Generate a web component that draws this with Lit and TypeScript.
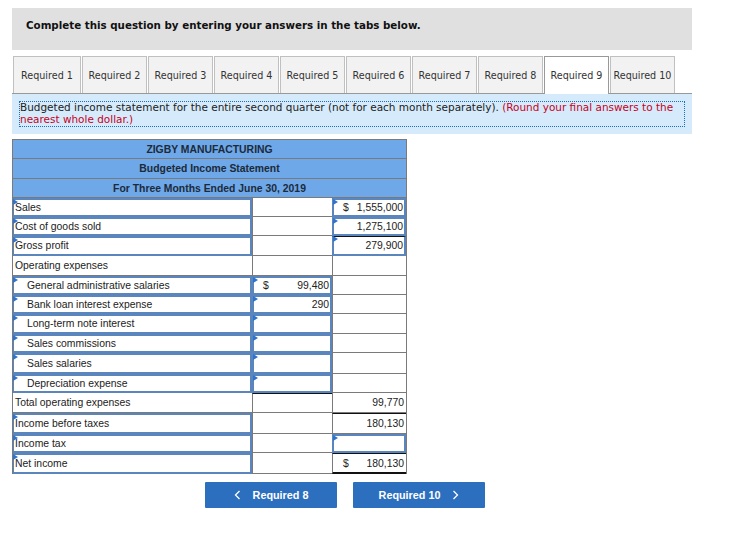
import {html, css, LitElement} from 'lit';
import {customElement} from 'lit/decorators.js';

interface Cell {
  text?: string;
  dollar?: boolean;
  input?: boolean;
  top?: boolean;
  bottom?: boolean;
}

interface Row {
  label: string;
  indent?: boolean;
  labelInput?: boolean;
  h: number;
  amount?: Cell;
  total?: Cell;
}

const TABS = [1, 2, 3, 4, 5, 6, 7, 8, 9, 10];

const ROWS: Row[] = [
  {label: 'Sales', labelInput: true, h: 19, amount: {}, total: {text: '1,555,000', dollar: true, input: true}},
  {label: 'Cost of goods sold', labelInput: true, h: 19, amount: {}, total: {text: '1,275,100', input: true}},
  {label: 'Gross profit', labelInput: true, h: 20, amount: {}, total: {text: '279,900', input: true, top: true}},
  {label: 'Operating expenses', h: 20},
  {label: 'General administrative salaries', indent: true, labelInput: true, h: 19, amount: {text: '99,480', dollar: true, input: true}},
  {label: 'Bank loan interest expense', indent: true, labelInput: true, h: 19, amount: {text: '290', input: true}},
  {label: 'Long-term note interest', indent: true, labelInput: true, h: 20, amount: {input: true}},
  {label: 'Sales commissions', indent: true, labelInput: true, h: 19, amount: {input: true}},
  {label: 'Sales salaries', indent: true, labelInput: true, h: 21, amount: {input: true}},
  {label: 'Depreciation expense', indent: true, labelInput: true, h: 19, amount: {input: true}},
  {label: 'Total operating expenses', h: 20, amount: {top: true}, total: {text: '99,770'}},
  {label: 'Income before taxes', labelInput: true, h: 21, amount: {}, total: {text: '180,130', top: true}},
  {label: 'Income tax', labelInput: true, h: 19, amount: {}, total: {input: true}},
  {label: 'Net income', labelInput: true, h: 21, amount: {}, total: {text: '180,130', dollar: true, top: true, bottom: true}},
];

@customElement('app-root')
export class AppRoot extends LitElement {
  static styles = css`
    :host {
      display: block;
      width: 743px;
      height: 544px;
      background: #fff;
      font-family: "DejaVu Sans", Verdana, sans-serif;
      color: #222;
      overflow: hidden;
    }

    .page {
      display: flex;
      flex-direction: column;
      width: 680px;
      padding: 8px 0 0 12px;
    }

    .prompt {
      height: 42px;
      box-sizing: border-box;
      padding: 11px 14px;
      background: #e0e0e0;
      font-size: 10.3px;
      line-height: 13px;
      font-weight: bold;
      color: #111;
    }

    .tabs {
      display: flex;
      gap: 1px;
      height: 37px;
      margin-top: 6px;
      padding-left: 1px;
      border-bottom: 1px solid #999;
    }

    .tab {
      width: 65px;
      height: 37px;
      box-sizing: border-box;
      display: flex;
      align-items: center;
      justify-content: center;
      padding-top: 1px;
      background: #f2f2f2;
      border: 1px solid #c0c0c0;
      border-bottom: none;
      font-size: 9.6px;
      color: #333;
    }

    .tab.first {
      width: 68px;
    }

    .tab.active {
      height: 38px;
      padding-bottom: 1px;
      background: #fff;
      border-color: #999;
      z-index: 1;
    }

    .note {
      height: 40px;
      box-sizing: border-box;
      padding: 7px;
      background: #d5eafa;
    }

    .note-text {
      height: 26px;
      box-sizing: border-box;
      border: 1px dotted #1a6fc4;
      font-size: 10.48px;
      line-height: 12px;
      color: #222;
    }

    .note-copy {
      margin-top: -1px;
    }

    .red {
      color: #c8001e;
    }

    .sheet {
      display: grid;
      grid-template-columns: 239px 80px 74px;
      width: 395px;
      margin-top: 5px;
      box-sizing: border-box;
      border-left: 1px solid #7a7a7a;
      border-right: 1px solid #7a7a7a;
      border-top: 1px solid #7a7a7a;
      font-family: "Liberation Sans", Arial, sans-serif;
      font-size: 10.4px;
      color: #222;
    }

    .head {
      grid-column: 1 / 4;
      height: 19px;
      box-sizing: border-box;
      display: flex;
      align-items: center;
      justify-content: center;
      background: #6ea8e8;
      border-bottom: 1px solid #7a7a7a;
      font-weight: bold;
      color: #1c2a3a;
    }

    .head.tall {
      height: 20px;
    }

    .cell {
      position: relative;
      box-sizing: border-box;
      display: flex;
      align-items: center;
      justify-content: flex-end;
      padding: 0 2px;
      border-bottom: 1px solid #7a7a7a;
      border-left: 1px solid #7a7a7a;
      background: #fff;
    }

    .cell.label {
      justify-content: flex-start;
      border-left: none;
      padding-left: 2px;
    }

    .cell.indent {
      padding-left: 14px;
    }

    .cell.input {
      border: 2px solid #5a86bd;
      padding: 0 1px 1px 1px;
    }

    .cell.input.label {
      border-left-width: 1px;
      padding-left: 1px;
    }

    .cell.input.indent {
      padding-left: 13px;
    }

    .cell.top {
      border-top: 1px solid #111;
    }

    .cell.bottom {
      border-bottom: 2px solid #111;
    }

    .cell.input::before {
      content: "";
      position: absolute;
      left: -1px;
      top: -1px;
      border-left: 5px solid #2f74cc;
      border-top: 3px solid transparent;
      border-bottom: 3px solid transparent;
    }

    .dollar {
      margin-right: auto;
      padding-left: 8px;
    }

    .actions {
      display: flex;
      gap: 16px;
      margin: 8px 0 0 193px;
    }

    .btn {
      width: 132px;
      height: 26px;
      display: flex;
      align-items: center;
      justify-content: center;
      gap: 12px;
      background: #2d6fbf;
      border-radius: 1px;
      font-family: "Liberation Sans", Arial, sans-serif;
      font-size: 10.8px;
      font-weight: bold;
      color: #fff;
    }

    .btn svg {
      display: block;
    }
  `;

  private renderCell(cell: Cell | undefined) {
    const c = cell ?? {};
    const cls = ['cell', c.input ? 'input' : '', c.top ? 'top' : '', c.bottom ? 'bottom' : ''].join(' ');
    return html`<div class=${cls}>
      ${c.dollar ? html`<span class="dollar">$</span>` : ''}${c.text ?? ''}
    </div>`;
  }

  render() {
    return html`
      <div class="page">
        <div class="prompt">Complete this question by entering your answers in the tabs below.</div>
        <div class="tabs">
          ${TABS.map((n) => html`<div class="tab ${n === 1 ? 'first' : ''} ${n === 9 ? 'active' : ''}">Required ${n}</div>`)}
        </div>
        <div class="note">
          <div class="note-text">
            <div class="note-copy">
              Budgeted income statement for the entire second quarter (not for each month separately).
              <span class="red">(Round your final answers to the nearest whole dollar.)</span>
            </div>
          </div>
        </div>
        <div class="sheet">
          <div class="head">ZIGBY MANUFACTURING</div>
          <div class="head tall">Budgeted Income Statement</div>
          <div class="head">For Three Months Ended June 30, 2019</div>
          ${ROWS.map((row) => html`
            <div
              class="cell label ${row.indent ? 'indent' : ''} ${row.labelInput ? 'input' : ''}"
              style="height:${row.h}px"
            >${row.label}</div>
            ${this.renderCell(row.amount)}
            ${this.renderCell(row.total)}
          `)}
        </div>
        <div class="actions">
          <div class="btn">
            <svg width="7" height="10" viewBox="0 0 7 10"><path d="M5.5 1 1.5 5l4 4" fill="none" stroke="#fff" stroke-width="1.3"/></svg>
            Required 8
          </div>
          <div class="btn">
            Required 10
            <svg width="7" height="10" viewBox="0 0 7 10"><path d="M1.5 1l4 4-4 4" fill="none" stroke="#fff" stroke-width="1.3"/></svg>
          </div>
        </div>
      </div>
    `;
  }
}
